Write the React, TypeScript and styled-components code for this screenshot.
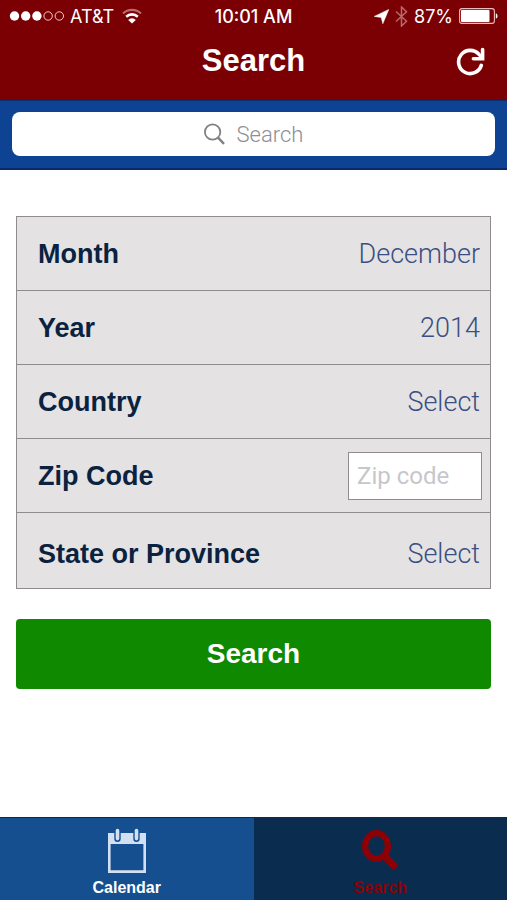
import React from "react";
import styled, { createGlobalStyle, css } from "styled-components";

const GlobalStyle = createGlobalStyle`
  *, *::before, *::after { box-sizing: border-box; }
  body {
    margin: 0;
    background: #fff;
    font-family: "Liberation Sans", Arial, sans-serif;
  }
  button, input, select { margin: 0; font: inherit; }
`;

const lightFont = css`
  font-family: Roboto, "Liberation Sans", sans-serif;
  font-weight: 300;
`;

const Screen = styled.div`
  display: flex;
  flex-direction: column;
  min-height: 100vh;
`;

const Header = styled.header`
  background: #7b0004;
  color: #fff;
`;

const StatusBar = styled.div`
  display: grid;
  grid-template-columns: 1fr auto 1fr;
  align-items: center;
  height: 32px;
  padding: 0 9px;
  font-family: Inter, "Liberation Sans", sans-serif;
  font-size: 18px;
`;

const StatusGroup = styled.div<{ $end?: boolean }>`
  display: flex;
  align-items: center;
  gap: ${(p) => (p.$end ? 6 : 8)}px;
  justify-content: ${(p) => (p.$end ? "flex-end" : "flex-start")};
`;

const Carrier = styled.span`
  display: flex;
  align-items: center;
  gap: 6px;
`;

const Clock = styled.time`
  font-weight: 500;
`;

const TitleBar = styled.div`
  display: grid;
  grid-template-columns: 1fr auto 1fr;
  align-items: center;
  height: 68px;
  padding: 0 22px 10px;
`;

const Title = styled.h1`
  grid-column: 2;
  margin: 0;
  font-size: 31px;
  line-height: 40px;
`;

const RefreshButton = styled.button`
  justify-self: end;
  display: flex;
  padding: 0;
  border: 0;
  background: none;
  color: inherit;
`;

const SearchBar = styled.div`
  padding: 11px 12px 12px;
  background: #0e4292;
  border-top: 1px solid #0b2f6c;
  border-bottom: 2px solid #0a2a66;
`;

const SearchBox = styled.label`
  display: flex;
  align-items: center;
  justify-content: center;
  gap: 12px;
  height: 44px;
  border-radius: 8px;
  background: #fff;
  color: #808083;
`;

const SearchInput = styled.input`
  ${lightFont}
  field-sizing: content;
  padding: 0;
  border: 0;
  outline: 0;
  background: none;
  color: #333;
  font-size: 22px;
  &::placeholder { color: #8e8e93; opacity: 1; }
`;

const Form = styled.form`
  flex: 1;
  display: flex;
  flex-direction: column;
  gap: 30px;
  padding: 46px 16px 30px;
`;

const Fields = styled.div`
  border: 1px solid #8f8c8e;
  background: #e4e2e3;
`;

const Row = styled.div`
  display: flex;
  align-items: center;
  justify-content: space-between;
  min-height: 74px;
  padding: 0 10px 0 21px;
  & + & { border-top: 1px solid #8f8c8e; }
  &:first-child { min-height: 73px; }
  &:last-child { min-height: 76px; padding-top: 6px; }
`;

const FieldLabel = styled.label`
  color: #0a2240;
  font-size: 27px;
  font-weight: 700;
  line-height: 32px;
`;

const FieldSelect = styled.select`
  ${lightFont}
  appearance: none;
  padding: 0;
  border: 0;
  background: none;
  color: #3b4f82;
  font-size: 27px;
  line-height: 36px;
  text-align: right;
  text-align-last: right;
  field-sizing: content;
`;

const ZipInput = styled.input`
  width: 134px;
  height: 48px;
  padding: 0 8px;
  margin-right: -2px;
  border: 1px solid #8f8c8e;
  border-radius: 0;
  background: #fff;
  color: #3b4f82;
  font-family: Roboto, "Liberation Sans", sans-serif;
  font-size: 24px;
  &::placeholder { color: #c7c7cb; opacity: 1; }
`;

const SubmitButton = styled.button`
  height: 70px;
  border: 0;
  border-radius: 4px;
  background: #0e8900;
  color: #fff;
  font-size: 28px;
  font-weight: 700;
`;

const TabBar = styled.nav`
  display: grid;
  grid-template-columns: 1fr 1fr;
`;

const Tab = styled.a<{ $active?: boolean }>`
  display: flex;
  flex-direction: column;
  align-items: center;
  gap: 4px;
  height: 83px;
  padding-top: 10px;
  border-top: 1px solid #0a2a55;
  background: ${(p) => (p.$active ? "#0a2d4f" : "#154f90")};
  color: ${(p) => (p.$active ? "#8d0006" : "#fff")};
  font-size: 16px;
  font-weight: 700;
  line-height: 20px;
  text-decoration: none;
`;

const SignalDots = () => (
  <svg width="55" height="12" viewBox="0 0 55 12" aria-label="Signal strength">
    {[0, 1, 2].map((i) => (
      <circle key={i} cx={5.5 + i * 11.2} cy="6" r="4.7" fill="#fff" />
    ))}
    {[3, 4].map((i) => (
      <circle key={i} cx={5.5 + i * 11.2} cy="6" r="4.2" fill="none" stroke="#f3caca" />
    ))}
  </svg>
);

const WifiIcon = () => (
  <svg width="20" height="16" viewBox="0 0 20 16" fill="none" aria-label="Wi-Fi">
    <path d="M1 5.5a13 13 0 0 1 18 0" stroke="#b86a6c" strokeWidth="2.2" />
    <path d="M4.2 8.7a8.5 8.5 0 0 1 11.6 0" stroke="#fff" strokeWidth="2.6" />
    <path d="M10 15.4 6.2 11.9a5.4 5.4 0 0 1 7.6 0z" fill="#fff" />
  </svg>
);

const LocationIcon = () => (
  <svg width="15" height="15" viewBox="0 0 15 15" aria-label="Location">
    <path d="M14.8.4 8.8 14.8 7.2 8.4 .2 7.4z" fill="#fff" stroke="#fff" strokeWidth=".5" />
  </svg>
);

const BluetoothIcon = () => (
  <svg width="13" height="21" viewBox="0 0 13 21" fill="none" aria-label="Bluetooth">
    <path d="m1 5.5 10.5 9.7L6.5 20V1l5 4.8L1 15.5" stroke="#b56a6b" strokeWidth="1.5" />
  </svg>
);

const BatteryIcon = () => (
  <svg width="39" height="16" viewBox="0 0 39 16" aria-label="Battery">
    <rect x=".6" y=".6" width="34.8" height="14.8" rx="2.4" fill="none" stroke="#efbcbc" strokeWidth="1.1" />
    <rect x="2" y="2" width="28.5" height="12" rx="1" fill="#fff" />
    <path d="M36.8 5.2c2.3.8 2.3 4.8 0 5.6z" fill="#fff" />
  </svg>
);

const RefreshIcon = () => (
  <svg width="29" height="29" viewBox="0 0 29 29" fill="none" stroke="#fff" strokeWidth="3.6" strokeLinecap="round" aria-hidden="true">
    <path d="M25.3 18.4A11.6 11.6 0 1 1 23 7.4L26 10.6" />
    <path d="M26.6 2.6v9.2H17.4" strokeLinejoin="miter" />
  </svg>
);

const SearchGlass = () => (
  <svg width="21" height="22" viewBox="0 0 21 22" fill="none" stroke="currentColor" aria-hidden="true">
    <circle cx="8.6" cy="9" r="7.7" strokeWidth="1.8" />
    <path d="m14 14.6 6 6.2" strokeWidth="2.4" />
  </svg>
);

const CalendarIcon = () => (
  <svg width="38" height="46" viewBox="0 0 38 46" aria-hidden="true">
    <path fill="#d3e0f2" fillRule="evenodd" d="M0 5h38v40H0zM2.6 16v26.2h32.8V16z" />
    <g strokeLinecap="round">
      <path d="M9.5 3.2v7.6M28.5 3.2v7.6" stroke="#154f90" strokeWidth="6.4" />
      <path d="M9.5 2.6v8M28.5 2.6v8" stroke="#d3e0f2" strokeWidth="3.6" />
    </g>
  </svg>
);

const TabGlass = () => (
  <svg width="36" height="46" viewBox="0 0 36 46" fill="none" stroke="currentColor" aria-hidden="true">
    <ellipse cx="14.5" cy="18" rx="11.4" ry="12.8" strokeWidth="6.2" />
    <path d="m23 28.5 8.8 9" strokeWidth="7" strokeLinecap="round" />
  </svg>
);

const selects = {
  month: { label: "Month", options: ["December", "January", "February", "March"] },
  year: { label: "Year", options: ["2014", "2015"] },
  country: { label: "Country", options: ["Select", "United States", "Canada"] },
  region: { label: "State or Province", options: ["Select", "Alabama", "Ontario"] },
};

const SelectRow = ({ name }: { name: keyof typeof selects }) => (
  <Row>
    <FieldLabel htmlFor={name}>{selects[name].label}</FieldLabel>
    <FieldSelect id={name} name={name}>
      {selects[name].options.map((o) => (
        <option key={o}>{o}</option>
      ))}
    </FieldSelect>
  </Row>
);

export default function App() {
  return (
    <Screen>
      <GlobalStyle />
      <Header>
        <StatusBar>
          <StatusGroup>
            <Carrier>
              <SignalDots />
              AT&amp;T
            </Carrier>
            <WifiIcon />
          </StatusGroup>
          <Clock>10:01 AM</Clock>
          <StatusGroup $end>
            <LocationIcon />
            <BluetoothIcon />
            <span>87%</span>
            <BatteryIcon />
          </StatusGroup>
        </StatusBar>
        <TitleBar>
          <Title>Search</Title>
          <RefreshButton type="button" aria-label="Refresh">
            <RefreshIcon />
          </RefreshButton>
        </TitleBar>
      </Header>
      <SearchBar>
        <SearchBox>
          <SearchGlass />
          <SearchInput type="text" placeholder="Search" aria-label="Search" />
        </SearchBox>
      </SearchBar>
      <Form onSubmit={(e) => e.preventDefault()}>
        <Fields>
          <SelectRow name="month" />
          <SelectRow name="year" />
          <SelectRow name="country" />
          <Row>
            <FieldLabel htmlFor="zip">Zip Code</FieldLabel>
            <ZipInput id="zip" name="zip" type="text" placeholder="Zip code" />
          </Row>
          <SelectRow name="region" />
        </Fields>
        <SubmitButton type="submit">Search</SubmitButton>
      </Form>
      <TabBar>
        <Tab href="#calendar">
          <CalendarIcon />
          Calendar
        </Tab>
        <Tab href="#search" $active aria-current="page">
          <TabGlass />
          Search
        </Tab>
      </TabBar>
    </Screen>
  );
}
